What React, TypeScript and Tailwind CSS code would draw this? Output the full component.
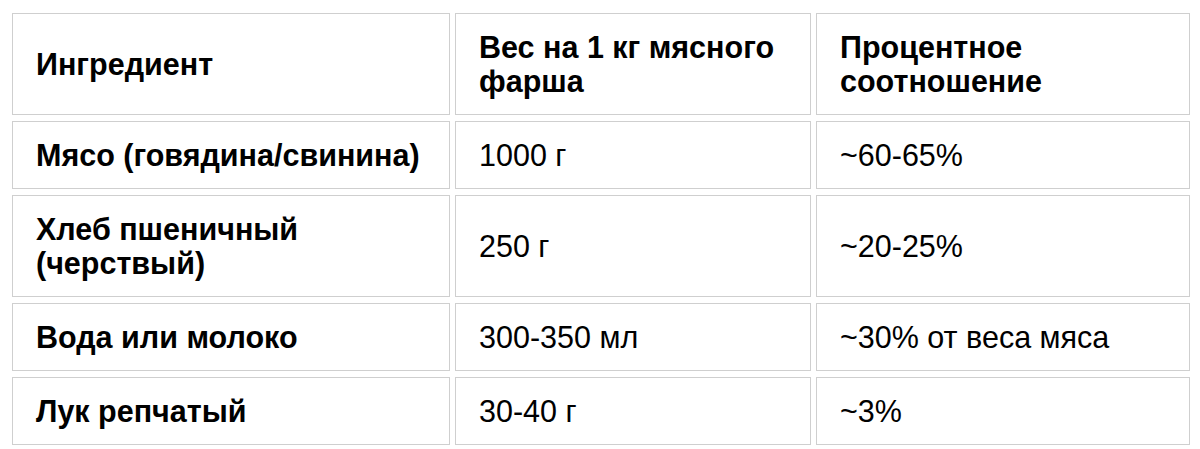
const header = ['Ингредиент', 'Вес на 1 кг мясного фарша', 'Процентное соотношение'];

const rows: [string, string, string][] = [
  ['Мясо (говядина/свинина)', '1000 г', '~60-65%'],
  ['Хлеб пшеничный (черствый)', '250 г', '~20-25%'],
  ['Вода или молоко', '300-350 мл', '~30% от веса мяса'],
  ['Лук репчатый', '30-40 г', '~3%'],
];

function Cell({ children, bold }: { children: React.ReactNode; bold?: boolean }) {
  return (
    <div
      className={
        'flex items-center border border-[#cfcfcf] px-[23px] py-4 text-[30.5px] leading-[34px] text-black ' +
        (bold ? 'font-bold' : 'font-normal')
      }
    >
      <span>{children}</span>
    </div>
  );
}

export default function App() {
  return (
    <div className="min-h-[449px] bg-white pl-3 pt-[13px] font-['Liberation_Sans',Arial,sans-serif]">
      <div className="grid grid-cols-[438px_356px_374px] gap-x-[5px] gap-y-[6px]">
        {header.map((h) => (
          <Cell key={h} bold>
            {h}
          </Cell>
        ))}
        {rows.map(([name, weight, pct]) => (
          <>
            <Cell key={name} bold>
              {name}
            </Cell>
            <Cell key={name + '-w'}>{weight}</Cell>
            <Cell key={name + '-p'}>{pct}</Cell>
          </>
        ))}
      </div>
    </div>
  );
}
